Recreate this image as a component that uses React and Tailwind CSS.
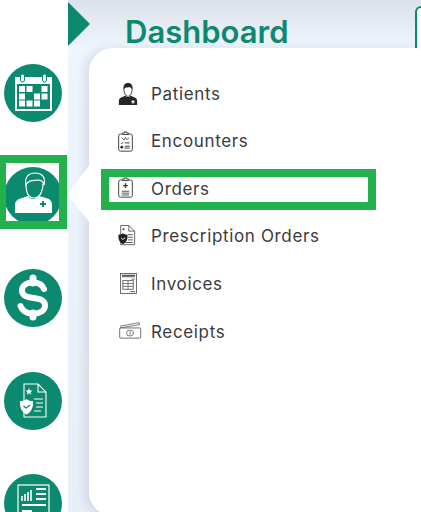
const G = "#0b8a6f";

function Circle({ children }) {
  return (
    <svg viewBox="0 0 58 58" className="block h-[58px] w-[58px] shrink-0">
      <circle cx="29" cy="29" r="29" fill={G} />
      {children}
    </svg>
  );
}

function CalendarIcon() {
  const cols = [15, 22.5, 30, 37.5];
  const rows = [22, 29.5, 36.5];
  const on = [[1, 1, 0, 1], [1, 0, 1, 1], [1, 1, 1, 0]];
  return (
    <Circle>
      <rect x="11" y="13" width="37" height="34" fill="#fff" />
      <rect x="13" y="20" width="33" height="25" fill={G} />
      {rows.map((y, r) => cols.map((x, c) => on[r][c] ? <rect key={`${r}${c}`} x={x} y={y} width="6" height="6" fill="#fff" /> : null))}
      <rect x="16.5" y="10" width="4" height="8" rx="2" fill="#fff" stroke={G} strokeWidth="1" />
      <rect x="38.5" y="10" width="4" height="8" rx="2" fill="#fff" stroke={G} strokeWidth="1" />
    </Circle>
  );
}

function DoctorIcon() {
  return (
    <Circle>
      <path d="M11 46 V38 C11 34 14 32 18 31 L24 29 C26 33 33 33 35 29 L42 31 C46 32 48 34 48 38 V46 Z" fill="#fff" />
      <path d="M22 17 C22 24 24 31 30 31 C36 31 39 24 39 17" fill={G} stroke="#fff" strokeWidth="1.2" />
      <path d="M22 18 C20 9 26 6 31 6 C37 6 42 9 40 18 C39 14 37 13 34 13 C30 14 25 12 22 18 Z" fill={G} stroke="#fff" strokeWidth="1.2" />
      <path d="M39 34 V40 M36 37 H42" stroke={G} strokeWidth="2" />
    </Circle>
  );
}

function DollarIcon() {
  return (
    <Circle>
      <path d="M40 20 C38 15 33 13.500 29 13.500 C22 13.500 18 17 18 21.500 C18 33 41 25 41 36.500 C41 41.500 36 44.500 29 44.500 C24 44.500 18.500 42.500 16.500 37" fill="none" stroke="#fff" strokeWidth="6" strokeLinecap="round" />
      <path d="M29 9 V14 M29 44 V48" stroke="#fff" strokeWidth="7" strokeLinecap="round" />
    </Circle>
  );
}

function DocShieldIcon() {
  return (
    <Circle>
      <path d="M20 12 H34 L42 20 V45 H20 Z M34 12 V20 H42" fill="none" stroke="#fff" strokeWidth="1.100" />
      <path d="M30 27 H39 M32 31 H39 M32 35 H39 M30 39 H37" stroke="#fff" strokeWidth="1.100" />
      <path d="M25 16 L26 18.500 L28.500 18.500 L26.600 20.200 L27.300 22.800 L25 21.300 L22.700 22.800 L23.400 20.200 L21.500 18.500 L24 18.500 Z" fill="#fff" />
      <path d="M22.500 27 C25 29 27 29 29 29 C29.500 35 27.500 40 22.500 42.500 C17.500 40 15.500 35 16 29 C18 29 20 29 22.500 27 Z" fill="#fff" />
      <path d="M19.500 34 L22 36 L26 33" fill="none" stroke={G} strokeWidth="1.300" />
    </Circle>
  );
}

function ReportIcon() {
  return (
    <Circle>
      <rect x="14" y="11" width="31" height="42" fill="none" stroke="#fff" strokeWidth="1.200" />
      <path d="M18 27 V22 M21 27 V20 M24 27 V18 M27 27 V16" stroke="#fff" strokeWidth="2" opacity="0.8" />
      <path d="M32 15 H42 M32 20 H42 M32 25 H42 M18 31 H42 M18 37 H28 M18 42 H28" stroke="#fff" strokeWidth="2" />
      <path d="M36 38 A 7 7 0 1 1 29 45 L36 45 Z" fill="#fff" />
    </Circle>
  );
}

function PatientGlyph() {
  return (
    <svg viewBox="0 0 24 24" preserveAspectRatio="none" className="h-[22px] w-[20px]">
      <path d="M1 24 V20 C1 17 3 16 6 15 L9 13.500 C10 16 14 16 15 13.500 L18 15 C21 16 23 17 23 20 V24 Z" fill="#262626" />
      <path d="M7 5 C7 11 9 14.500 12 14.500 C15 14.500 17 11 17 5" fill="#fff" stroke="#262626" strokeWidth="1" />
      <path d="M7 7 C5.500 2 9 0 12 0 C15 0 18.500 2 17 7 C16 5 15 4.500 13 4.500 C11 5 8.500 4 7 7 Z" fill="#262626" />
      <path d="M18 18.500 V22.500 M16 20.500 H20" stroke="#fff" strokeWidth="1.300" />
    </svg>
  );
}

function ClipboardGlyph({ orders }) {
  return (
    <svg viewBox="0 0 16 22" className="h-[21px] w-[15px]" fill="none" stroke="#3a3a3a">
      <rect x="0.700" y="3" width="14.600" height="18.300" rx="2" strokeWidth="1" />
      <path d="M5 3.500 H11 V1.800 H9 V0.700 H7 V1.800 H5 Z" fill="#fff" strokeWidth="1" />
      {orders ? (
        <>
          <path d="M8 6.500 V11.500 M5.500 9 H10.500" strokeWidth="1.500" />
          <path d="M4 15 H12 M4 17 H12 M4 19 H12" strokeWidth="0.900" />
        </>
      ) : (
        <>
          <path d="M4 7 L6.500 9.500 L8 6.500 L9.500 9 L12 7" strokeWidth="0.800" />
          <path d="M7 12.500 H12.500 M7 16 H12.500 M7 18 H12.500" strokeWidth="1" />
          <path d="M3 12.500 L4 13.500 L5.500 11.500" strokeWidth="0.800" />
          <circle cx="4" cy="17" r="1.500" fill="#262626" stroke="none" />
        </>
      )}
    </svg>
  );
}

function PrescriptionGlyph() {
  return (
    <svg viewBox="0 0 20 24" preserveAspectRatio="none" className="h-[21px] w-[18px]" fill="none" stroke="#444">
      <path d="M3 0.600 H12 L18.500 7 V22.500 H3 Z M12 0.600 V7 H18.500" strokeWidth="0.900" />
      <path d="M11 11 H16.500 M11 14 H16.500 M11 17 H16.500 M8 20 H16.500" strokeWidth="1" />
      <path d="M6 3.500 L7 5.500 L5 5.500 Z" fill="#333" strokeWidth="0.600" />
      <path d="M5.500 9.500 C7 11 9 11 10.500 11 C11 16 9.500 19.500 5.500 22 C1.500 19.500 0 16 0.500 11 C2 11 4 11 5.500 9.500 Z" fill="#222" stroke="none" />
      <path d="M3.500 15 L5.500 16.500 L8 14.500" stroke="#fff" strokeWidth="1" />
    </svg>
  );
}

function InvoiceGlyph() {
  return (
    <svg viewBox="0 0 18 22" preserveAspectRatio="none" className="h-[21px] w-[17px]" fill="none" stroke="#555">
      <rect x="0.500" y="0.500" width="17" height="21" strokeWidth="0.900" />
      <path d="M2 2.500 H16 M2 4 H16" strokeWidth="1.100" />
      <path d="M12 6.500 H16" strokeWidth="0.800" />
      <rect x="3" y="8" width="11" height="9" strokeWidth="0.900" />
      <path d="M3 11 H14 M3 14 H14 M8.500 8 V17" strokeWidth="0.800" />
      <path d="M11 19.500 H16" strokeWidth="1" />
    </svg>
  );
}

function ReceiptGlyph() {
  return (
    <svg viewBox="0 0 23 20" preserveAspectRatio="none" className="h-[17px] w-[23px]" fill="none" stroke="#666">
      <path d="M1 5 L20 0.700 L20.500 3 M1 7 L21 3" strokeWidth="0.900" />
      <rect x="0.700" y="7" width="21" height="12" rx="1" strokeWidth="1" />
      <circle cx="11" cy="13" r="3.500" strokeWidth="0.900" />
      <path d="M11 11 V15" strokeWidth="0.900" />
    </svg>
  );
}

const menu = [
  ["Patients", <PatientGlyph />, "mb-0"],
  ["Encounters", <ClipboardGlyph />, "mb-[1px]"],
  ["Orders", <ClipboardGlyph orders />, "mb-[3px]"],
  ["Prescription Orders", <PrescriptionGlyph />, "mb-[4px]"],
  ["Invoices", <InvoiceGlyph />, "mb-[3px] ml-[2px]"],
  ["Receipts", <ReceiptGlyph />, "mb-[4px] ml-[1px]"],
];

export default function App() {
  return (
    <div className="flex h-[512px] w-[421px] overflow-hidden bg-white font-['Inter',sans-serif]">
      <aside className="relative z-10 flex w-[68px] shrink-0 flex-col gap-[44.5px] bg-white pl-[4px] pt-[64px]">
        <CalendarIcon />
        <div className="relative">
          <DoctorIcon />
          <div className="absolute left-[-4px] top-[-12px] h-[74px] w-[67px] border-[8px] border-l-[6px] border-[#22b14c]" />
        </div>
        <DollarIcon />
        <DocShieldIcon />
        <ReportIcon />
      </aside>

      <main className="relative min-w-0 flex-1 bg-[linear-gradient(180deg,#dde1ea_0px,#eef5fd_48px,#e8eef8_100%)]">
        <div className="absolute left-0 top-[2px] h-0 w-0 border-y-[22px] border-l-[22px] border-y-transparent border-l-[#0b8a6f]" />
        <div className="absolute left-[-1px] top-[166px] z-10 h-0 w-0 border-y-[28px] border-r-[22px] border-y-transparent border-r-white" />
        <div className="absolute left-[347px] top-[6px] h-[60px] w-[30px] rounded-tl-[6px] border-l-2 border-t-2 border-[#0b8a6f] bg-white" />

        <h1 className="pl-[57px] pt-[12px] text-[31px] font-semibold leading-[40px] text-[#0b8a6f]">Dashboard</h1>

        <div className="absolute left-[21px] top-[48px] h-[468px] w-[360px] rounded-[24px] bg-white pl-[12px] pt-[22.5px] shadow-[-5px_0_9px_rgba(100,110,140,0.16)]">
          <ul className="flex flex-col">
            {menu.map(([label, icon, nudge]) => {
              const active = label === "Orders";
              return (
                <li key={label} className={`flex h-[47.6px] items-center ${active ? "relative" : ""}`}>
                  <span className="flex w-[50px] shrink-0 pl-[17px]">
                    <span className={`flex ${nudge}`}>{icon}</span>
                  </span>
                  <span className="text-[17px] tracking-[0.65px] text-[#3a3a3a]">{label}</span>
                  {active && <div className="absolute left-0 top-[3px] h-[41px] w-[275px] border-[8px] border-[#22b14c]" />}
                </li>
              );
            })}
          </ul>
        </div>
      </main>
    </div>
  );
}
